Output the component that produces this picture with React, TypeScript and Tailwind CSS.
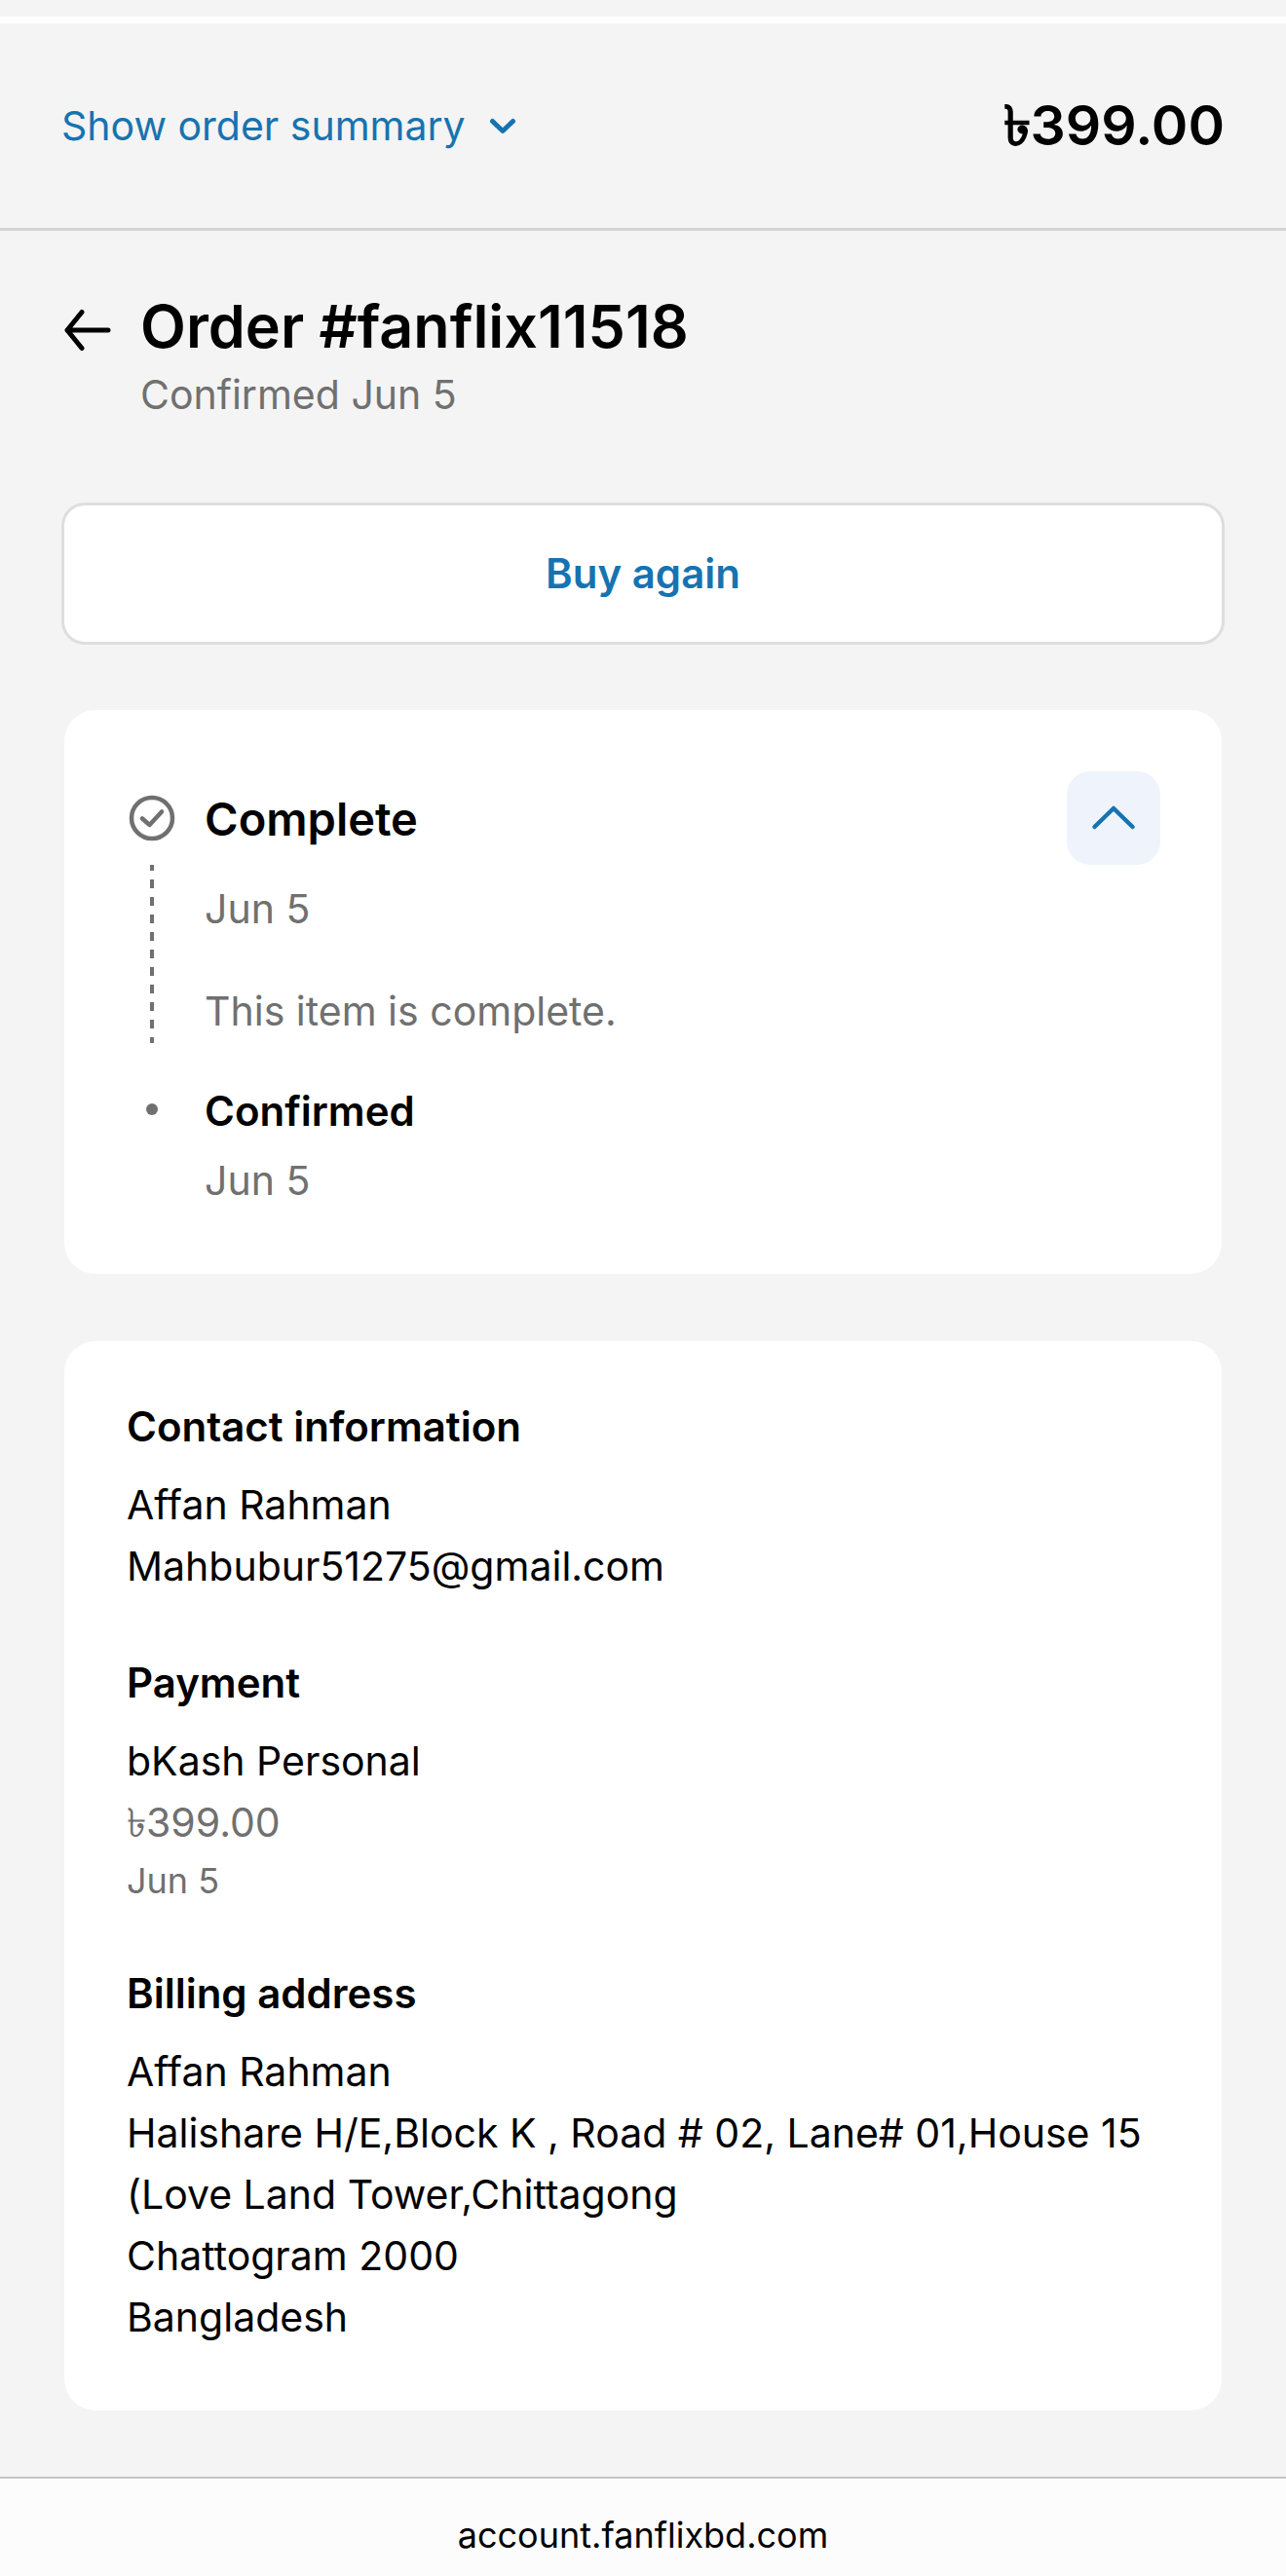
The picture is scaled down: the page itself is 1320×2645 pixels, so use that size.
import { useState } from "react"

interface InfoSectionProps {
  title: string
  children: React.ReactNode
}

function ChevronDownIcon() {
  return (
    <svg className="h-7 w-7" viewBox="0 0 28 28" fill="none" stroke="currentColor" strokeWidth="5" strokeLinecap="round" strokeLinejoin="round" aria-hidden="true">
      <path d="M3.500 9.500L14 19.500l10.500-10" />
    </svg>
  )
}

function ChevronUpIcon() {
  return (
    <svg className="h-12 w-12" viewBox="0 0 48 48" fill="none" stroke="currentColor" strokeWidth="4.5" strokeLinecap="round" strokeLinejoin="round" aria-hidden="true">
      <path d="M4.500 33L24 14L43.500 33" />
    </svg>
  )
}

function BackIcon() {
  return (
    <svg className="h-12 w-12" viewBox="0 0 48 48" fill="none" stroke="currentColor" strokeWidth="5" strokeLinecap="round" strokeLinejoin="round" aria-hidden="true">
      <path d="M45 24H3M18 5.500L3 24l15 18.500" />
    </svg>
  )
}

function CheckCircleIcon() {
  return (
    <svg className="h-12 w-12" viewBox="0 0 48 48" fill="none" stroke="currentColor" strokeWidth="4.5" strokeLinecap="round" strokeLinejoin="round" aria-hidden="true">
      <circle cx="24" cy="24" r="21" />
      <path d="M14 24.500l7.500 6.500L34 17.500" />
    </svg>
  )
}

function InfoSection({ title, children }: InfoSectionProps) {
  return (
    <section>
      <h2 className="mb-[18px] text-[42px] leading-[63px] font-semibold">{title}</h2>
      {children}
    </section>
  )
}

const billingAddress = [
  "Affan Rahman",
  "Halishare H/E,Block K , Road # 02, Lane# 01,House 15 (Love Land Tower,Chittagong",
  "Chattogram 2000",
  "Bangladesh",
]

export default function App() {
  const [open, setOpen] = useState(true)

  return (
    <div className="bg-[#f4f4f4] font-['Inter','Noto_Sans',sans-serif] text-[41px] leading-[63px] text-black">
      <div className="h-6 border-b-[7px] border-white" />

      <header className="flex items-center justify-between border-b-3 border-[#d4d4d4] px-[63px] py-[65px]">
        <button type="button" className="flex items-center gap-6 text-[#1773b0]">
          Show order summary
          <ChevronDownIcon />
        </button>
        <span className="text-[57px] leading-[80px] font-semibold">৳399.00</span>
      </header>

      <main className="flex flex-col px-[63px] pt-[58px] pb-[68px]">
        <div className="flex items-start gap-[30px] px-[3px]">
          <a href="#orders" aria-label="Back to orders" className="mt-5">
            <BackIcon />
          </a>
          <div>
            <h1 className="text-[61px] leading-[80px] font-semibold">Order #fanflix11518</h1>
            <p className="leading-[60px] text-[#707070]">Confirmed Jun 5</p>
          </div>
        </div>

        <button type="button" className="mt-[81px] rounded-3xl border-3 border-[#dedede] bg-white pt-[38px] pb-[39px] text-[42px] leading-[63px] font-semibold text-[#1773b0]">
          Buy again
        </button>

        <section className="mx-[3px] mt-[67px] rounded-[32px] bg-white pt-[63px] pr-[63px] pb-16 pl-[66px]">
          <div className="flex items-center">
            <span className="text-[#707070]">
              <CheckCircleIcon />
            </span>
            <h2 className="ml-[30px] flex-1 text-[47px] leading-[63px] font-semibold">Complete</h2>
            <button
              type="button"
              aria-label="Toggle order status"
              aria-expanded={open}
              onClick={() => setOpen(!open)}
              className="flex h-24 w-24 items-center justify-center rounded-3xl bg-[#eff4fc] text-[#1773b0]"
            >
              <ChevronUpIcon />
            </button>
          </div>
          {open && (
            <div className="grid grid-cols-[48px_1fr] gap-x-[30px]">
              <div className="h-[183px] w-1 justify-self-center bg-[repeating-linear-gradient(to_bottom,#707070_0,#707070_6px,transparent_6px,transparent_15px,#707070_15px,#707070_18px)]" />
              <div className="pt-3.5 text-[#707070]">
                <p>Jun 5</p>
                <p className="mt-[42px]">This item is complete.</p>
              </div>
              <span className="mt-[62px] h-3 w-3 justify-self-center rounded-full bg-[#707070]" />
              <div className="pt-[38px]">
                <h3 className="text-[42px] leading-[63px] font-semibold">Confirmed</h3>
                <p className="mt-[9px] text-[#707070]">Jun 5</p>
              </div>
            </div>
          )}
        </section>

        <div className="mx-[3px] mt-[69px] flex flex-col gap-14 rounded-[32px] bg-white px-16 pt-14 pb-16">
          <InfoSection title="Contact information">
            <p>Affan Rahman</p>
            <p>Mahbubur51275@gmail.com</p>
          </InfoSection>
          <InfoSection title="Payment">
            <p>bKash Personal</p>
            <p className="text-[#707070]">৳399.00</p>
            <p className="text-[36px] leading-[56px] text-[#707070]">Jun 5</p>
          </InfoSection>
          <InfoSection title="Billing address">
            <address className="not-italic">
              {billingAddress.map((line) => (
                <p key={line}>{line}</p>
              ))}
            </address>
          </InfoSection>
        </div>
      </main>

      <footer className="border-t-2 border-[#c4c4c4] bg-[#fcfcfc] pt-9 pb-5 text-center text-[36px] leading-[44px]">
        account.fanflixbd.com
      </footer>
    </div>
  )
}
